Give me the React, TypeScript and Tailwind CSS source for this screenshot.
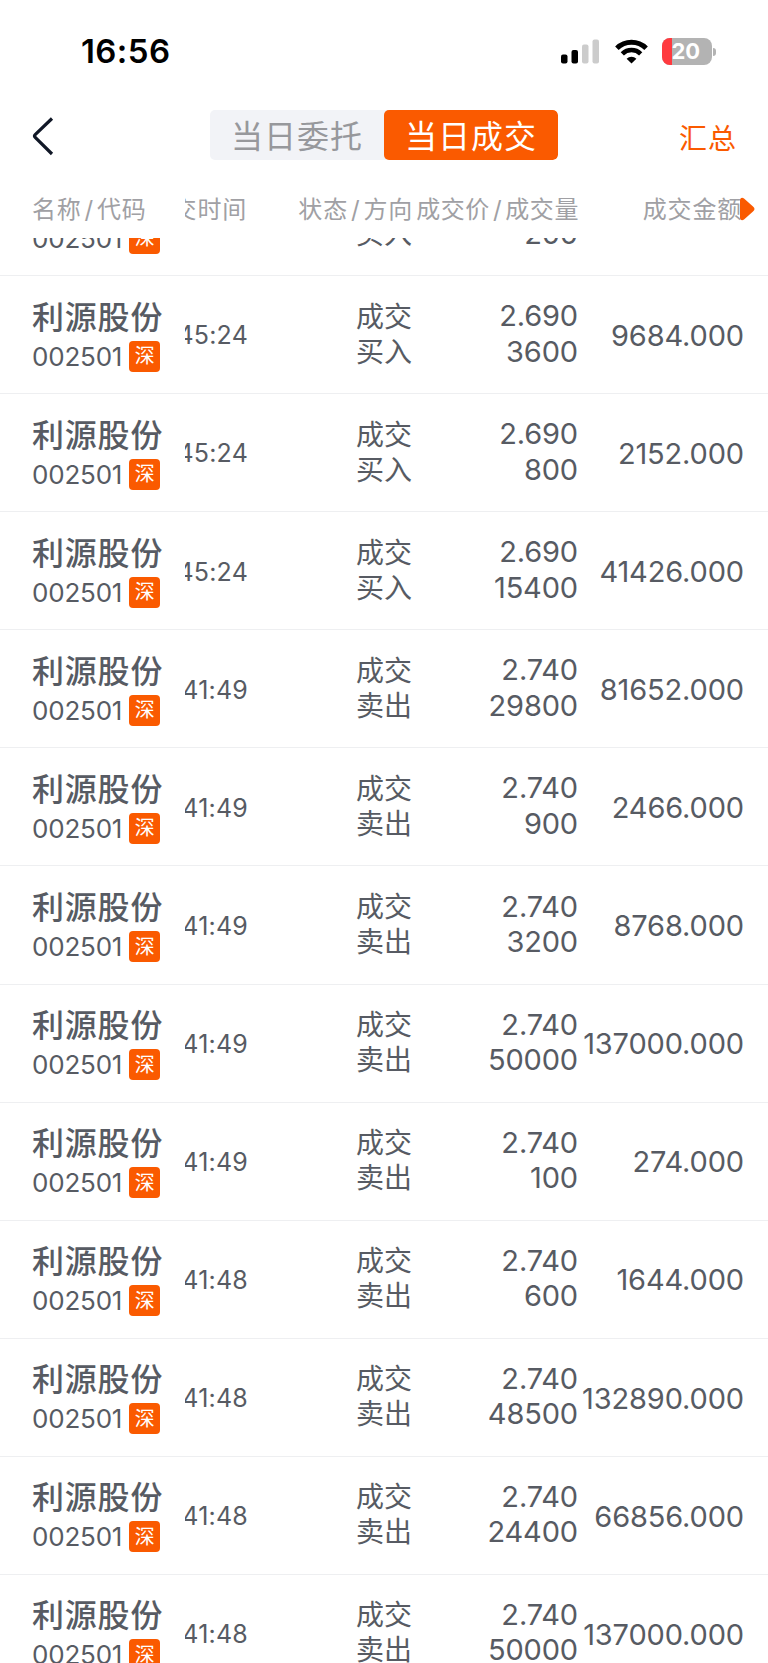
interface Trade {
  time: string
  side: string
  price: string
  volume: string
  amount: string
}

const trades: Trade[] = [
  { time: '45:24', side: '买入', price: '2.690', volume: '200', amount: '538.000' },
  { time: '45:24', side: '买入', price: '2.690', volume: '3600', amount: '9684.000' },
  { time: '45:24', side: '买入', price: '2.690', volume: '800', amount: '2152.000' },
  { time: '45:24', side: '买入', price: '2.690', volume: '15400', amount: '41426.000' },
  { time: '41:49', side: '卖出', price: '2.740', volume: '29800', amount: '81652.000' },
  { time: '41:49', side: '卖出', price: '2.740', volume: '900', amount: '2466.000' },
  { time: '41:49', side: '卖出', price: '2.740', volume: '3200', amount: '8768.000' },
  { time: '41:49', side: '卖出', price: '2.740', volume: '50000', amount: '137000.000' },
  { time: '41:49', side: '卖出', price: '2.740', volume: '100', amount: '274.000' },
  { time: '41:48', side: '卖出', price: '2.740', volume: '600', amount: '1644.000' },
  { time: '41:48', side: '卖出', price: '2.740', volume: '48500', amount: '132890.000' },
  { time: '41:48', side: '卖出', price: '2.740', volume: '24400', amount: '66856.000' },
  { time: '41:48', side: '卖出', price: '2.740', volume: '50000', amount: '137000.000' },
]

function StatusBar() {
  return (
    <div className="flex h-[100px] items-center justify-between pl-[81px] pr-[52px] pt-[3px]">
      <span className="text-[33px] font-semibold leading-none tracking-[0.4px] text-black">16:56</span>
      <div className="flex items-center">
        <svg width="39" height="25" viewBox="0 0 39 25" className="mr-[15px]">
          <rect x="0" y="15.5" width="6.5" height="9" rx="2" fill="#000" />
          <rect x="10.5" y="11" width="6.5" height="13.5" rx="2" fill="#000" />
          <rect x="21" y="5.5" width="6.5" height="19" rx="2" fill="#ccc" />
          <rect x="31.5" y="0.5" width="6.5" height="24" rx="2" fill="#ccc" />
        </svg>
        <svg width="33" height="25" viewBox="0 0 33 25" fill="none" stroke="#000" className="mr-[14px]">
          <path d="M1.9 9.3a20.8 20.8 0 0 1 29.2 0" strokeWidth="5" />
          <path d="M7.3 14.8a13.2 13.2 0 0 1 18.4 0" strokeWidth="4.6" />
          <path d="M16.5 24.6l-4.9-4.9a7 7 0 0 1 9.8 0z" fill="#000" stroke="none" />
        </svg>
        <div className="flex h-[27px] w-[50px] overflow-hidden rounded-[8px] bg-[#b3b3b3]">
          <div className="w-[10px] bg-[#ff3a3f]" />
          <span className="text-[22px] font-bold leading-[27px] text-white">20</span>
        </div>
        <div className="ml-[1.5px] h-2 w-[3px] rounded-r-full bg-[#b3b3b3]" />
      </div>
    </div>
  )
}

function NavBar() {
  return (
    <div className="grid h-[80px] grid-cols-[210px_348px_1fr] pt-[10px]">
      <svg width="24" height="42" viewBox="0 0 24 42" fill="none" stroke="#111827" className="ml-[31px] mt-[5px]">
        <path d="M21 3.5L4.2 19.6a2 2 0 0 0 0 2.8L21 39" strokeWidth="3.2" />
      </svg>
      <div className="flex h-[50px] overflow-hidden rounded-[5px] bg-[#f2f3f7] text-[32px] leading-[50px] tracking-[1px]">
        <button className="w-[174px] pt-[2px] text-[#97989c]">当日委托</button>
        <button className="w-[174px] rounded-[5px] bg-[#fa5a00] pt-[2px] text-white">当日成交</button>
      </div>
      <button className="h-[57px] pr-[31px] text-right text-[28px] tracking-[1px] text-[#fa5a00]">汇总</button>
    </div>
  )
}

function Slash() {
  return <span className="mx-[3px]">/</span>
}

function TableHeader() {
  return (
    <div className="grid h-[58px] grid-cols-[153px_62px_164px_167px_163px_27px] items-center pl-8 pt-[2px] text-[24px] leading-[56px] tracking-[0.8px] text-[#a0a0a4]">
      <span className="whitespace-nowrap">
        名称
        <Slash />
        代码
      </span>
      <span className="flex justify-end overflow-hidden whitespace-nowrap">成交时间</span>
      <span className="-mr-0.5 flex justify-end whitespace-nowrap">
        状态
        <Slash />
        方向
      </span>
      <span className="-mr-px flex justify-end whitespace-nowrap tracking-[0.6px]">
        成交价
        <Slash />
        成交量
      </span>
      <span className="-mr-px flex justify-end whitespace-nowrap">成交金额</span>
      <svg width="15" height="24" viewBox="0 0 15 24" className="-ml-px -mt-0.5">
        <path d="M0 3.5C0 .8 2.2 0 4 1.600L13 9.500C15 11.200 15 12.800 13 14.500L4 22.400C2.200 24 0 23.200 0 20.500Z" fill="#fa5a00" />
      </svg>
    </div>
  )
}

function TradeRow({ trade }: { trade: Trade }) {
  return (
    <div className="grid h-[118.09px] grid-cols-[153px_62px_164px_167px_165px] items-center border-b-[1.5px] border-[#eeeff1] pl-8 text-[#575b63]">
      <div className="pt-[3px]">
        <div className="whitespace-nowrap text-[32px] font-medium leading-[40px] tracking-[0.8px]">利源股份</div>
        <div className="flex items-center gap-[7px]">
          <span className="text-[26px] leading-[37px] tracking-[-0.2px]">002501</span>
          <span className="flex size-[31px] items-center justify-center rounded-[4px] bg-[#fa5a00] text-[20px] text-white">
            深
          </span>
        </div>
      </div>
      <div className="-mr-px flex justify-end overflow-hidden pt-[3px] text-[25px] tracking-[0.2px]">{trade.time}</div>
      <div className="-mr-px text-right text-[28px] leading-[35px]">
        <div>成交</div>
        <div>{trade.side}</div>
      </div>
      <div className="pb-[2px] text-right text-[29px] leading-[35.5px] tracking-[-0.15px]">
        <div>{trade.price}</div>
        <div>{trade.volume}</div>
      </div>
      <div className="-mr-px flex justify-end whitespace-nowrap pt-[2px] text-[29px] tracking-[-0.15px]">{trade.amount}</div>
    </div>
  )
}

export default function App() {
  return (
    <div className="flex h-[1663px] w-[768px] flex-col overflow-hidden bg-white font-[Inter,'Noto_Sans_CJK_SC',sans-serif]">
      <StatusBar />
      <NavBar />
      <TableHeader />
      <div className="flex-1 overflow-hidden">
        <div className="-mt-[80px]">
          {trades.map((trade, i) => (
            <TradeRow key={i} trade={trade} />
          ))}
        </div>
      </div>
    </div>
  )
}
